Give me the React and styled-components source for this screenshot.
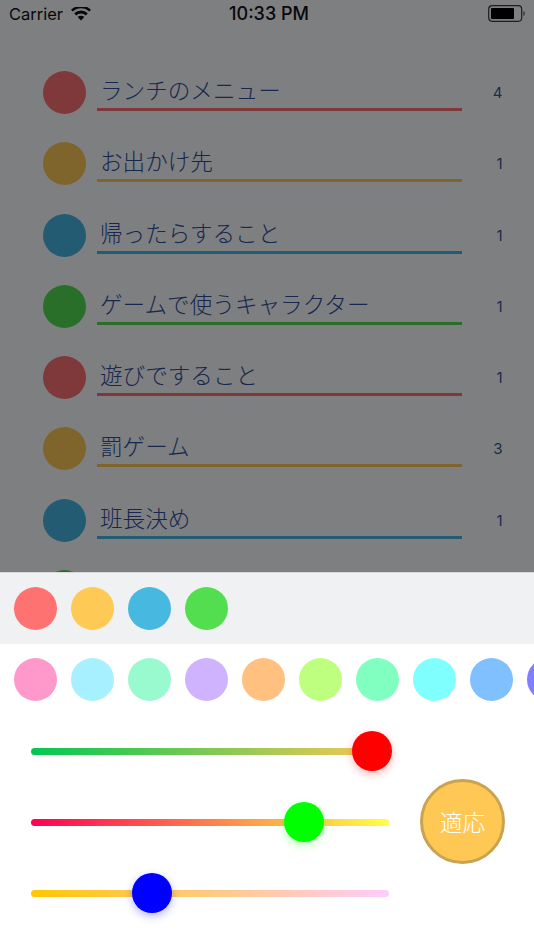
import React from 'react';
import styled, { createGlobalStyle } from 'styled-components';

const GlobalStyle = createGlobalStyle`
  html, body {
    margin: 0;
    padding: 0;
    background: #fff;
  }
`;

const Screen = styled.div`
  width: 534px;
  height: 950px;
  display: flex;
  flex-direction: column;
  overflow: hidden;
  background: #fff;
  font-family: "Noto Sans CJK JP", "Liberation Sans", sans-serif;
`;

const Dimmed = styled.div`
  position: relative;
  height: 572px;
  flex: none;
  overflow: hidden;
  background: #fcfeff;
`;

const Overlay = styled.div`
  position: absolute;
  inset: 0;
  background: rgba(0, 0, 3, 0.5);
`;

const StatusBar = styled.div`
  height: 27px;
  display: grid;
  grid-template-columns: 1fr auto 1fr;
  align-items: center;
  padding: 0 9px 1px 9px;
  font-family: Inter, "Liberation Sans", sans-serif;
  font-size: 16.5px;
  color: #111;
`;

const Carrier = styled.div`
  display: flex;
  align-items: center;
  gap: 8px;
`;

const Clock = styled.div`
  font-size: 18px;
  font-weight: 500;
  padding-left: 4px;
`;

const Battery = styled.div`
  justify-self: end;
  display: flex;
`;

const List = styled.div`
  display: flex;
  flex-direction: column;
  gap: 28.3px;
  padding: 43px 31.5px 0 43px;
`;

const Row = styled.div`
  display: flex;
  align-items: flex-start;
  height: 43px;
`;

const Dot = styled.div`
  flex: none;
  width: 43px;
  height: 43px;
  border-radius: 50%;
  background: ${(p) => p.$color};
`;

const Title = styled.div`
  width: 365px;
  height: 40px;
  margin-left: 11px;
  padding-left: 3px;
  box-sizing: border-box;
  border-bottom: 3px solid ${(p) => p.$color};
  font-size: 22.6px;
  line-height: 38px;
  font-weight: 300;
  color: #2f4f99;
  white-space: nowrap;
`;

const Count = styled.div`
  flex: 1;
  text-align: right;
  font-family: Inter, "Liberation Sans", sans-serif;
  font-size: 15px;
  line-height: 43px;
  color: #3a5698;
`;

const Sheet = styled.div`
  flex: 1;
  display: flex;
  flex-direction: column;
`;

const ThemeBand = styled.div`
  height: 72px;
  flex: none;
  display: flex;
  align-items: center;
  gap: 14px;
  padding-left: 14px;
  background: #f0f1f3;
  border-top: 1px solid #d8d8d8;
  box-sizing: border-box;
`;

const ColorBand = styled(ThemeBand)`
  height: 71px;
  background: #fff;
  border-top: 0;
`;

const Swatch = styled.div`
  flex: none;
  width: 43px;
  height: 43px;
  border-radius: 50%;
  background: ${(p) => p.$color};
`;

const Mixer = styled.div`
  flex: 1;
  display: flex;
  align-items: center;
  padding: 0 0 20px 31px;
`;

const Sliders = styled.div`
  display: flex;
  flex-direction: column;
  gap: 64px;
  width: 358px;
`;

const Track = styled.div`
  position: relative;
  height: 7px;
  border-radius: 4px;
  background: linear-gradient(to right, ${(p) => p.$from}, ${(p) => p.$to});
`;

const Thumb = styled.div`
  position: absolute;
  top: 50%;
  width: 40px;
  height: 40px;
  border-radius: 50%;
  transform: translate(-50%, -50%);
  margin-top: -1px;
  background: ${(p) => p.$color};
  box-shadow: 0 3px 8px ${(p) => p.$shadow};
`;

const ApplyButton = styled.button`
  width: 85px;
  height: 85px;
  margin: -3px 0 0 31px;
  padding: 0;
  border-radius: 50%;
  border: 3px solid #c9a350;
  background: #ffc855;
  color: #fff;
  font-family: "Noto Sans CJK JP", sans-serif;
  font-size: 22.7px;
  font-weight: 300;
`;

const rows = [
  ['ランチのメニュー', 4, '#ff7272'],
  ['お出かけ先', 1, '#ffc955'],
  ['帰ったらすること', 1, '#47b8e0'],
  ['ゲームで使うキャラクター', 1, '#52de4f'],
  ['遊びですること', 1, '#ff7272'],
  ['罰ゲーム', 3, '#ffc955'],
  ['班長決め', 1, '#47b8e0'],
  ['', '', '#52de4f'],
];

const themeColors = ['#ff7272', '#ffc955', '#47b8e0', '#52de4f'];
const paletteColors = ['#ff99cc', '#a6f0ff', '#99f9cf', '#d0b3ff', '#ffc080', '#bfff80', '#80ffc0', '#80ffff', '#80c0ff', '#8080ff'];

const sliders = [
  { from: '#00c853', to: '#ffc855', color: '#ff0000', shadow: 'rgba(255,0,0,0.3)', left: 95.2 },
  { from: '#ff0055', to: '#ffff44', color: '#00ff00', shadow: 'rgba(0,255,0,0.3)', left: 76.3 },
  { from: '#ffc800', to: '#ffccff', color: '#0000ff', shadow: 'rgba(0,0,255,0.3)', left: 33.8 },
];

const WifiIcon = () => (
  <svg width="20" height="14" viewBox="0 0 20 14">
    <path d="M10 13.6 L6.7 10 A4.7 4.7 0 0 1 13.3 10 Z" fill="#111" />
    <path d="M5.2 8.4 L3.2 6.2 A9.7 9.7 0 0 1 16.8 6.2 L14.8 8.4 A6.8 6.8 0 0 0 5.2 8.4 Z" fill="#111" />
    <path d="M1.7 4.6 L0 2.8 A14.3 14.3 0 0 1 20 2.8 L18.3 4.6 A11.8 11.8 0 0 0 1.7 4.6 Z" fill="#111" />
  </svg>
);

const BatteryIcon = () => (
  <svg width="37" height="17" viewBox="0 0 37 17">
    <rect x="0.7" y="0.7" width="33" height="15.6" rx="3.5" fill="none" stroke="#3c3c3c" strokeWidth="1.2" />
    <rect x="3" y="3" width="23" height="11" rx="1" fill="#000" />
    <path d="M35.5 6 C37 6.5 37 10.5 35.5 11 Z" fill="#3c3c3c" />
  </svg>
);

export default function App() {
  return (
    <Screen>
      <GlobalStyle />
      <Dimmed>
        <StatusBar>
          <Carrier>
            Carrier
            <WifiIcon />
          </Carrier>
          <Clock>10:33 PM</Clock>
          <Battery>
            <BatteryIcon />
          </Battery>
        </StatusBar>
        <List>
          {rows.map(([title, count, color], i) => (
            <Row key={i}>
              <Dot $color={color} />
              <Title $color={color}>{title}</Title>
              <Count>{count}</Count>
            </Row>
          ))}
        </List>
        <Overlay />
      </Dimmed>
      <Sheet>
        <ThemeBand>
          {themeColors.map((c) => (
            <Swatch key={c} $color={c} />
          ))}
        </ThemeBand>
        <ColorBand>
          {paletteColors.map((c) => (
            <Swatch key={c} $color={c} />
          ))}
        </ColorBand>
        <Mixer>
          <Sliders>
            {sliders.map((s) => (
              <Track key={s.color} $from={s.from} $to={s.to}>
                <Thumb $color={s.color} $shadow={s.shadow} style={{ left: `${s.left}%` }} />
              </Track>
            ))}
          </Sliders>
          <ApplyButton>適応</ApplyButton>
        </Mixer>
      </Sheet>
    </Screen>
  );
}
